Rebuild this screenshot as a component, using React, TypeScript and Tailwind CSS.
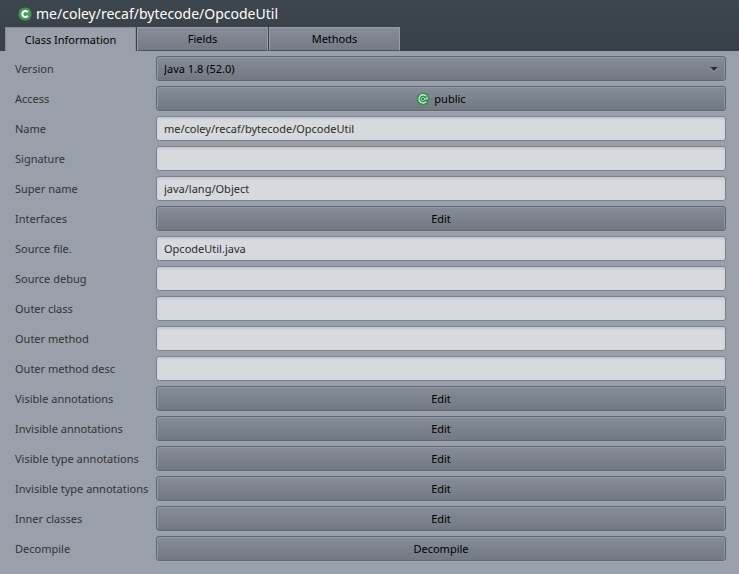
import React, { useState } from "react";

type Field = {
  id: string;
  label: string;
  kind: "select" | "input" | "button" | "access";
  value: string;
};

const fields: Field[] = [
  { id: "version", label: "Version", kind: "select", value: "Java 1.8 (52.0)" },
  { id: "access", label: "Access", kind: "access", value: "public" },
  { id: "name", label: "Name", kind: "input", value: "me/coley/recaf/bytecode/OpcodeUtil" },
  { id: "signature", label: "Signature", kind: "input", value: "" },
  { id: "super", label: "Super name", kind: "input", value: "java/lang/Object" },
  { id: "interfaces", label: "Interfaces", kind: "button", value: "Edit" },
  { id: "source", label: "Source file.", kind: "input", value: "OpcodeUtil.java" },
  { id: "debug", label: "Source debug", kind: "input", value: "" },
  { id: "outer-class", label: "Outer class", kind: "input", value: "" },
  { id: "outer-method", label: "Outer method", kind: "input", value: "" },
  { id: "outer-desc", label: "Outer method desc", kind: "input", value: "" },
  { id: "visible", label: "Visible annotations", kind: "button", value: "Edit" },
  { id: "invisible", label: "Invisible annotations", kind: "button", value: "Edit" },
  { id: "visible-type", label: "Visible type annotations", kind: "button", value: "Edit" },
  { id: "invisible-type", label: "Invisible type annotations", kind: "button", value: "Edit" },
  { id: "inner", label: "Inner classes", kind: "button", value: "Edit" },
  { id: "decompile", label: "Decompile", kind: "button", value: "Decompile" },
];

const tabs = ["Class Information", "Fields", "Methods"];

const raised =
  "h-[25px] w-full rounded-[3px] border border-[#5f6771] bg-linear-to-b from-[#868d97] to-[#727983] text-black shadow-[inset_1px_1px_0_#949ba5,inset_-1px_0_0_#8d949e,0_1px_0_#a2a8b2]";

function ClassIcon() {
  return (
    <svg className="size-[14px] shrink-0" viewBox="0 0 14 14" aria-hidden="true">
      <circle cx="7" cy="7" r="6.6" fill="#4c9c60" />
      <circle cx="7" cy="7" r="5.6" fill="none" stroke="#2f7a45" strokeWidth="1" strokeDasharray="1.3 1" />
      <path d="M9.8 5.3A3 3 0 1 0 9.8 8.7" fill="none" stroke="#fff" strokeWidth="2" />
    </svg>
  );
}

function PublicIcon() {
  return (
    <svg className="size-[14px] shrink-0" viewBox="0 0 14 14" aria-hidden="true">
      <circle cx="7" cy="7" r="6.5" fill="#2f8248" />
      <circle cx="7" cy="7" r="5.9" fill="none" stroke="#58a86d" strokeWidth="1" strokeDasharray="1.2 1.2" />
      <path d="M10.2 4.2A4.1 4.1 0 1 0 10.4 9.3" fill="none" stroke="#d5eadb" strokeWidth="1.4" />
      <circle cx="7" cy="7" r="1.7" fill="none" stroke="#a9d3b4" strokeWidth="1" />
      <path d="M8.5 7h2.6V4.8" fill="none" stroke="#d5eadb" strokeWidth="1.2" />
    </svg>
  );
}

function Control({ field }: { field: Field }) {
  if (field.kind === "select") {
    return (
      <div className="relative h-[25px]">
        <select id={field.id} className={`${raised} block appearance-none px-[7px]`}>
          <option>{field.value}</option>
        </select>
        <svg className="pointer-events-none absolute right-2 top-[11px] h-[5px] w-[8px]" viewBox="0 0 8 5" aria-hidden="true">
          <path d="M0 1h8L4 5z" fill="#a5abb4" />
          <path d="M0 0h8L4 4z" fill="#292c30" />
        </svg>
      </div>
    );
  }
  if (field.kind === "input") {
    return (
      <input
        id={field.id}
        type="text"
        defaultValue={field.value}
        className="block h-[25px] w-full rounded-[3px] border border-[#7b828c] bg-[#d6d9de] px-[7px] text-[#2b2b2b] shadow-[inset_0_2px_2px_#c4c8ce] outline-none"
      />
    );
  }
  return (
    <button id={field.id} type="button" className={`${raised} flex items-center justify-center gap-1`}>
      {field.kind === "access" && <PublicIcon />}
      <span>{field.value}</span>
    </button>
  );
}

export default function App() {
  const [active, setActive] = useState(0);
  return (
    <div className="flex min-h-screen flex-col bg-[#9aa0aa] font-['Noto_Sans','Open_Sans',sans-serif] text-[11px] leading-4">
      <header className="bg-linear-to-b from-[#3d454d] to-[#383f47]">
        <h1 className="flex h-[27px] items-center gap-1 px-[18px] text-[14px] leading-5 text-white">
          <ClassIcon />
          <span>me/coley/recaf/bytecode/OpcodeUtil</span>
        </h1>
        <div role="tablist" className="flex h-6 gap-px px-[5px]">
          {tabs.map((tab, i) => (
            <button
              key={tab}
              type="button"
              role="tab"
              aria-selected={i === active}
              onClick={() => setActive(i)}
              className={
                i === active
                  ? "w-[131px] border-l border-t border-r border-[#858c96] bg-[#9aa0aa] text-black"
                  : "w-[131px] border-b border-l border-r border-t border-[#969da7] border-b-[#4b535c] bg-linear-to-b from-[#868d97] to-[#747b85] text-black"
              }
            >
              {tab}
            </button>
          ))}
        </div>
      </header>
      <main className="flex flex-col gap-[5px] pb-3 pl-[15px] pr-[13px] pt-[5px]">
        {fields.map((field) => (
          <div key={field.id} className="grid grid-cols-[141px_1fr] items-center">
            <label htmlFor={field.id} className="whitespace-nowrap text-[#333333]">
              {field.label}
            </label>
            <Control field={field} />
          </div>
        ))}
      </main>
    </div>
  );
}
